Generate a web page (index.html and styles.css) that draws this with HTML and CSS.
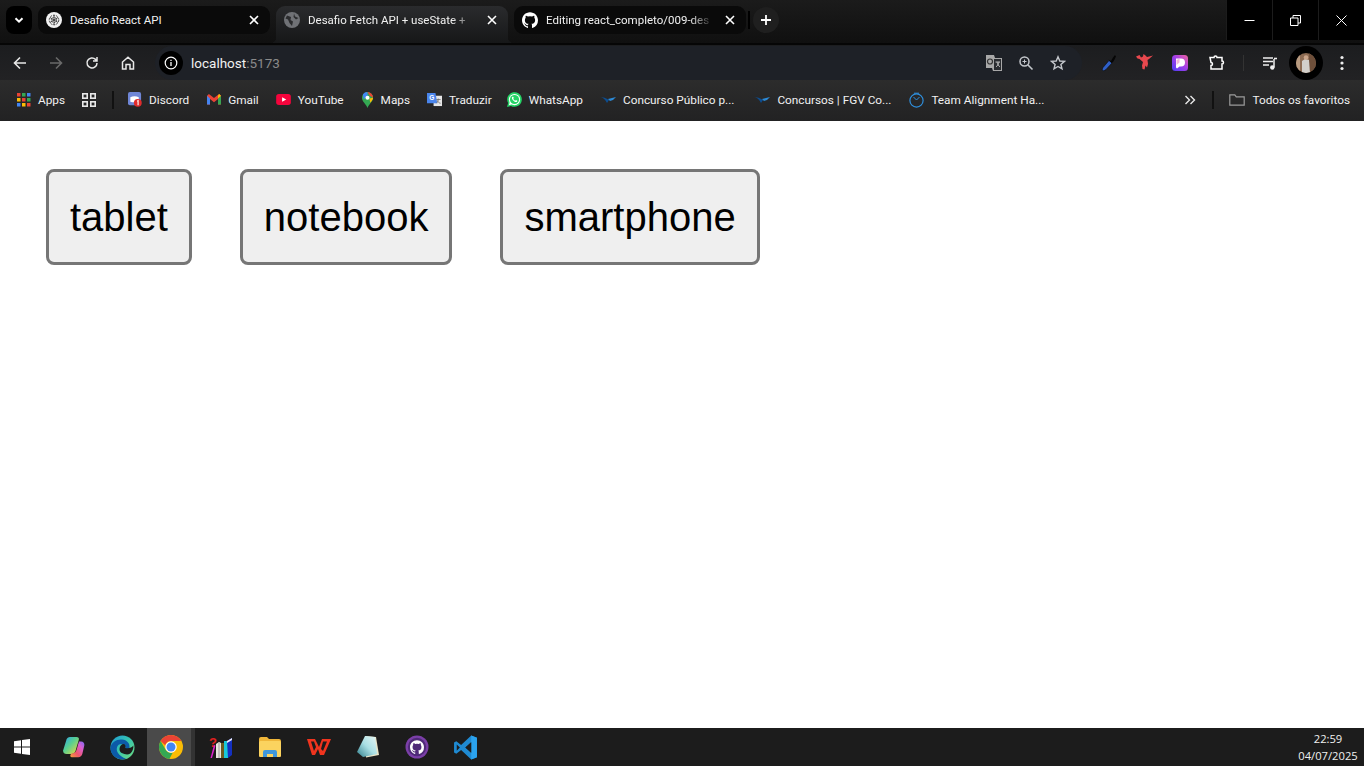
FILE: index.html
```html
<!DOCTYPE html>
<html lang="pt-BR">
<head>
<meta charset="utf-8">
<title>Desafio Fetch API + useState</title>
<link rel="stylesheet" href="styles.css">
</head>
<body>
<div class="app">
  <header class="chrome">
    <div class="tabstrip">
      <div class="tab-search"><svg width="12" height="12" viewBox="0 0 12 12"><path d="M2.500 4.200 6 7.700l3.500-3.500" fill="none" stroke="#fff" stroke-width="2"/></svg></div>
      <div class="tab">
        <svg class="fav" width="16" height="16" viewBox="0 0 16 16"><circle cx="8" cy="8" r="8" fill="#f2f2f2"/><g fill="none" stroke="#333" stroke-width=".9"><circle cx="8" cy="8" r="4.800" stroke-dasharray="2 1"/><circle cx="8" cy="8" r="2.600" stroke-dasharray="1.500 1"/><path d="M4 5.500 12 10.500M4 10.500 12 5.500M8 3v10"/></g></svg>
        <span class="tab-title">Desafio React API</span>
        <svg class="tab-x" width="10" height="10" viewBox="0 0 10 10"><path d="M1 1l8 8M9 1 1 9" stroke="#fff" stroke-width="1.600"/></svg>
      </div>
      <div class="tab active">
        <svg class="fav" width="16" height="16" viewBox="0 0 16 16"><circle cx="8" cy="8" r="8" fill="#707276"/><path d="M3 3.500 7 5 6.500 8 9 9.500 8 14 5.500 11 4 7.500 1.500 6.500ZM10 1.500l1 3 3.500 1.500L12 7.500 9.500 5Z" fill="#2b2c2e"/></svg>
        <span class="tab-title fade">Desafio Fetch API + useState +</span>
        <svg class="tab-x" width="10" height="10" viewBox="0 0 10 10"><path d="M1 1l8 8M9 1 1 9" stroke="#fff" stroke-width="1.600"/></svg>
      </div>
      <div class="tab last">
        <svg class="fav" width="16" height="16" viewBox="0 0 24 24"><path fill="#fff" d="M12 .5C5.370.5 0 5.870 0 12.500c0 5.300 3.440 9.800 8.200 11.390.6.110.82-.26.82-.58v-2.030c-3.340.73-4.040-1.610-4.040-1.610-.55-1.390-1.340-1.760-1.340-1.760-1.090-.75.08-.73.08-.73 1.200.08 1.840 1.240 1.840 1.240 1.070 1.830 2.810 1.300 3.500 1 .11-.78.42-1.310.76-1.610-2.670-.3-5.470-1.330-5.470-5.930 0-1.310.47-2.380 1.240-3.220-.12-.3-.54-1.520.12-3.180 0 0 1.010-.32 3.300 1.230a11.500 11.500 0 0 1 6 0c2.290-1.550 3.300-1.230 3.300-1.230.66 1.660.24 2.880.12 3.180.77.84 1.230 1.910 1.230 3.220 0 4.610-2.810 5.630-5.480 5.920.43.37.81 1.100.81 2.220v3.290c0 .32.22.7.82.58A12 12 0 0 0 24 12.500C24 5.870 18.630.5 12 .5z"/></svg>
        <span class="tab-title fade">Editing react_completo/009-des</span>
        <svg class="tab-x" width="10" height="10" viewBox="0 0 10 10"><path d="M1 1l8 8M9 1 1 9" stroke="#fff" stroke-width="1.600"/></svg>
      </div>
      <div class="tab-sep"></div>
      <div class="new-tab"><svg width="12" height="12" viewBox="0 0 12 12"><path d="M6 1v10M1 6h10" stroke="#fff" stroke-width="1.800"/></svg></div>
      <div class="window-controls">
        <div class="win-btn"><svg width="11" height="11" viewBox="0 0 11 11"><path d="M.5 5.500h10" stroke="#fff"/></svg></div>
        <div class="win-btn"><svg width="11" height="11" viewBox="0 0 11 11"><path d="M.5 3h7.500v7.500H.5zM3 3V.5h7.500V8H8" fill="none" stroke="#fff"/></svg></div>
        <div class="win-btn"><svg width="11" height="11" viewBox="0 0 11 11"><path d="M.5.5l10 10M10.500.5l-10 10" stroke="#fff"/></svg></div>
      </div>
    </div>

    <div class="toolbar">
      <div class="nav">
        <svg width="16" height="16" viewBox="0 0 16 16"><path d="M14 8H3M8 2.500 2.500 8 8 13.500" fill="none" stroke="#e8e8e8" stroke-width="1.600"/></svg>
        <svg width="16" height="16" viewBox="0 0 16 16"><path d="M2 8h11M8 2.500 13.500 8 8 13.500" fill="none" stroke="#6a6a6a" stroke-width="1.600"/></svg>
        <svg width="16" height="16" viewBox="0 0 16 16"><path d="M13 8a5 5 0 1 1-1.500-3.600L13 6M13 2v4H9" fill="none" stroke="#e8e8e8" stroke-width="1.500"/></svg>
        <svg width="16" height="16" viewBox="0 0 16 16"><path d="M2.500 14V7L8 2.200 13.500 7v7h-3.500V9.500H6V14Z" fill="none" stroke="#e8e8e8" stroke-width="1.500"/></svg>
      </div>
      <div class="omnibox">
        <div class="site-info"><svg width="14" height="14" viewBox="0 0 14 14"><circle cx="7" cy="7" r="5.800" fill="none" stroke="#fff" stroke-width="1.200"/><path d="M7 6v4M7 3.800v1.200" stroke="#fff" stroke-width="1.300"/></svg></div>
        <span class="url">localhost<span class="port">:5173</span></span>
        <div class="omni-actions">
          <svg width="18" height="18" viewBox="0 0 18 18"><path d="M1 1h8l1 3h7v13H8l-1-3H1z" fill="#a8a8a8"/><path d="M9 5h7v11H9z" fill="#2a2c30"/><circle cx="5" cy="7.500" r="2.500" fill="none" stroke="#333" stroke-width="1.200"/><path d="M10.500 8h4.500M12 8c.5 2.500 2 4 3 5M14 8c-.5 2.500-2 4-3 5" stroke="#bbb" fill="none"/></svg>
          <svg width="16" height="16" viewBox="0 0 16 16"><circle cx="6.500" cy="6.500" r="4.500" fill="none" stroke="#c4c7cc" stroke-width="1.500"/><path d="M10 10l4.500 4.500" stroke="#c4c7cc" stroke-width="1.600"/><path d="M4.500 6.500h4M6.500 4.500v4" stroke="#c4c7cc"/></svg>
          <svg width="16" height="16" viewBox="0 0 16 16"><path d="M8 1.800 9.800 6l4.600.4-3.500 3 1.100 4.500L8 11.500l-4 2.400 1.100-4.500-3.500-3L6.200 6Z" fill="none" stroke="#c4c7cc" stroke-width="1.400"/></svg>
        </div>
      </div>
      <div class="extensions">
        <svg width="16" height="18" viewBox="0 0 16 18"><path d="M1.500 16.500c-.5-1 0-2 .5-3L8 6.500l3 2.500-6 6.500c-1 1-2.500 1.500-3.500 1Z" fill="#2f5fc7" stroke="#0a0a0a" stroke-width=".6"/><path d="M7.500 5.500 10 7l2-3.500L14 1l1 1.500-1.500 3L12 8l-1.500 1Z" fill="#060606"/></svg>
        <svg class="ninja" width="18" height="17" viewBox="0 0 18 17"><path d="M0 2.500 3.500 1 5 3.500 7 2.500 7.500 0l2 1.500 1.500 1.500 6-1.500-4 3.500-1.500 1 .5 4-1 3.500-1.500-2-1 4-2-.5-.5-3.500 1-3.500L3.500 5 1.500 4.500Z" fill="#e8484e"/></svg>
        <svg width="16" height="16" viewBox="0 0 16 16"><defs><linearGradient id="pg" x1="0" y1="1" x2="1" y2="0"><stop offset="0" stop-color="#4b3df5"/><stop offset=".55" stop-color="#a63fe6"/><stop offset="1" stop-color="#f0649b"/></linearGradient></defs><rect width="16" height="16" rx="3.500" fill="url(#pg)"/><path d="M4 3.500h5a4 4 0 0 1 0 8H7.500L5 13.500l-1-1Z" fill="#fff"/><path d="M4.500 5 7.500 3.700V7.500L4.500 10Z" fill="#f2b6d8"/></svg>
        <svg width="17" height="17" viewBox="0 0 17 17"><path d="M2 3.500h4a1.500 1.500 0 0 1 3 0h5V7a1.500 1.500 0 0 1 0 3v5H3v-3.500a1.500 1.500 0 0 0 0-3Z" fill="none" stroke="#fff" stroke-width="1.500"/></svg>
        <div class="ext-sep"></div>
        <svg width="16" height="16" viewBox="0 0 16 16"><path d="M1 3h10M1 6.500h10M1 10h6" stroke="#eee" stroke-width="1.400"/><path d="M12 4v8.500" stroke="#eee" stroke-width="1.500"/><circle cx="10.300" cy="12.500" r="2.200" fill="#eee"/><path d="M12 3.500h3" stroke="#eee" stroke-width="1.600"/></svg>
        <div class="avatar"><svg width="20" height="20" viewBox="0 0 20 20"><defs><clipPath id="ac"><circle cx="10" cy="10" r="10"/></clipPath></defs><g clip-path="url(#ac)"><rect width="20" height="20" fill="#8c6b52"/><rect x="13" width="7" height="20" fill="#6e4f3a"/><rect x="0" width="4" height="20" fill="#b79a80"/><path d="M6 8l3-2 4 1 1 13H6z" fill="#d2cfca"/><circle cx="10" cy="4.500" r="2.300" fill="#caa58a"/></g></svg></div>
        <svg class="kebab" width="4" height="16" viewBox="0 0 4 16"><circle cx="2" cy="2.500" r="1.600" fill="#eee"/><circle cx="2" cy="8" r="1.600" fill="#eee"/><circle cx="2" cy="13.500" r="1.600" fill="#eee"/></svg>
      </div>
    </div>

    <nav class="bookmarks">
      <div class="bm">
        <svg width="14" height="14" viewBox="0 0 14 14"><rect width="3.500" height="3.500" fill="#ea4335"/><rect x="5" width="3.500" height="3.500" fill="#34a853"/><rect x="10" width="3.500" height="3.500" fill="#4285f4"/><rect y="5" width="3.500" height="3.500" fill="#fbbc05"/><rect x="5" y="5" width="3.500" height="3.500" fill="#ea4335"/><rect x="10" y="5" width="3.500" height="3.500" fill="#34a853"/><rect y="10" width="3.500" height="3.500" fill="#4285f4"/><rect x="5" y="10" width="3.500" height="3.500" fill="#fbbc05"/><rect x="10" y="10" width="3.500" height="3.500" fill="#ea4335"/></svg>
        <span>Apps</span>
      </div>
      <svg class="bm-grid" width="14" height="14" viewBox="0 0 14 14"><g fill="none" stroke="#e8e8e8" stroke-width="1.600"><rect x=".8" y=".8" width="4.400" height="4.400"/><rect x="8.800" y=".8" width="4.400" height="4.400"/><rect x=".8" y="8.800" width="4.400" height="4.400"/><rect x="8.800" y="8.800" width="4.400" height="4.400"/></g></svg>
      <div class="bm-sep first"></div>
      <div class="bm bm-discord">
        <svg width="14" height="16" viewBox="0 0 15 17"><rect y="0" width="14" height="14" rx="2" fill="#6f86d6"/><path d="M2.500 5.500c2.500-1.500 6.500-1.500 9 0v5l-2 .5H4.500l-2-.5Z" fill="#fff"/><circle cx="10.500" cy="11.500" r="4.200" fill="#e02b2b"/><path d="M9.800 9.800l1-.6v4.800" stroke="#fff" stroke-width="1.200" fill="none"/></svg>
        <span>Discord</span>
      </div>
      <div class="bm">
        <svg width="14" height="13" viewBox="0 0 15 14"><path d="M0 3v9.500h3.200V6.500L7.500 10l4.300-3.500v6H15V3L13 1 7.500 5.500 2 1Z" fill="#ea4335"/><path d="M0 3v9.500h3.200V6Z" fill="#4285f4"/><path d="M11.800 6v6.500H15V3Z" fill="#34a853"/><path d="M13 1l2 2-3.200 3V3Z" fill="#fbbc05"/></svg>
        <span>Gmail</span>
      </div>
      <div class="bm">
        <svg width="15" height="11" viewBox="0 0 16 12"><rect width="16" height="12" rx="3" fill="#f5043c"/><path d="M6.500 3.500 11 6 6.500 8.500Z" fill="#fff"/></svg>
        <span>YouTube</span>
      </div>
      <div class="bm">
        <svg width="13" height="16" viewBox="0 0 14 17"><path d="M7 0a6 6 0 0 1 6 6c0 4-4 6-6 11C5 12 1 10 1 6a6 6 0 0 1 6-6Z" fill="#34a853"/><path d="M2 2.500A6 6 0 0 1 7 0v4L3 8Z" fill="#4285f4"/><path d="M7 0a6 6 0 0 1 6 6L9.500 4Z" fill="#ea4335"/><path d="M13 6c0 2-1.500 3.500-3 5.500L9 7Z" fill="#fbbc05"/><circle cx="7" cy="6" r="2.200" fill="#fff"/></svg>
        <span>Maps</span>
      </div>
      <div class="bm">
        <svg width="15" height="15" viewBox="0 0 16 16"><path d="M7 4h9v11H7z" fill="#e6e6e6"/><path d="M0 1h9l2 11H0z" fill="#4a85ec"/><text class="g-glyph" x="2.500" y="9">G</text><path d="M10 8h4.500M12 7v1c0 2-1 3-2 4M11 9c.5 1.500 2 3 3.500 3" stroke="#666" stroke-width=".8" fill="none"/></svg>
        <span>Traduzir</span>
      </div>
      <div class="bm bm-whats">
        <svg width="15" height="15" viewBox="0 0 16 16"><path d="M0 16l1.200-4.200A7.800 7.800 0 1 1 4.200 14.800Z" fill="#25d366"/><circle cx="8" cy="8" r="6" fill="#fff"/><path d="M2 14l1-3.500 2.500 2.500Z" fill="#fff"/><circle cx="8" cy="8" r="4.900" fill="#25d366"/><path d="M5.800 5c-.8.6-.9 2 .4 3.600 1.300 1.700 3 2.500 4 2 .6-.3.800-.9.800-1.300L9.600 8.500l-.8.8c-1-.4-1.700-1.100-2.200-2.100l.7-.8L6.600 5Z" fill="#fff"/></svg>
        <span>WhatsApp</span>
      </div>
      <div class="bm">
        <svg width="16" height="8" viewBox="0 0 16 8"><path d="M0 1c3 .5 5 2 7 6l2-3C6 2 3 1 0 1Z" fill="#0d4d90"/><path d="M8 3l8-2-3 3-3 1Z" fill="#2c8ad6"/></svg>
        <span>Concurso Público p...</span>
      </div>
      <div class="bm bm-wide">
        <svg width="16" height="8" viewBox="0 0 16 8"><path d="M0 1c3 .5 5 2 7 6l2-3C6 2 3 1 0 1Z" fill="#0d4d90"/><path d="M8 3l8-2-3 3-3 1Z" fill="#2c8ad6"/></svg>
        <span>Concursos | FGV Co...</span>
      </div>
      <div class="bm bm-team">
        <svg width="15" height="16" viewBox="0 0 15 16"><circle cx="7.500" cy="8.500" r="6.600" fill="none" stroke="#2f8fdc" stroke-width="1.200"/><path d="M4.500 5l3 3 3-3M5 1.200h5" fill="none" stroke="#2f8fdc"/></svg>
        <span>Team Alignment Ha...</span>
      </div>
      <div class="bm-right">
        <svg width="12" height="10" viewBox="0 0 12 10"><path d="M1.500 1l4 4-4 4M6.500 1l4 4-4 4" fill="none" stroke="#e8e8e8" stroke-width="1.400"/></svg>
        <div class="bm-sep"></div>
        <div class="bm all">
          <svg width="16" height="14" viewBox="0 0 16 14"><path d="M.8 12.200V1.800h5l1.500 2h7.900v8.400Z" fill="none" stroke="#9a9a9a" stroke-width="1.200"/></svg>
          <span>Todos os favoritos</span>
        </div>
      </div>
    </nav>
  </header>

  <main class="page">
    <button class="product">tablet</button>
    <button class="product">notebook</button>
    <button class="product">smartphone</button>
  </main>

  <footer class="taskbar">
    <div class="task"><svg width="16" height="16" viewBox="0 0 16 16"><path d="M0 2.300 7 1.300V7.500H0ZM8 1.100 16 0V7.500H8ZM0 8.500H7V14.700L0 13.700ZM8 8.500H16V16L8 14.900Z" fill="#fff"/></svg></div>
    <div class="task"><svg width="24" height="24" viewBox="0 0 24 24"><defs><linearGradient id="co1" x1="0" y1="0" x2="1" y2="1"><stop offset="0" stop-color="#2aa4ee"/><stop offset=".45" stop-color="#5ad08f"/><stop offset="1" stop-color="#f7d83c"/></linearGradient><linearGradient id="co2" x1="0" y1="1" x2="1" y2="0"><stop offset="0" stop-color="#f6a13c"/><stop offset=".35" stop-color="#f0566a"/><stop offset=".7" stop-color="#d95fd0"/><stop offset="1" stop-color="#7a6af5"/></linearGradient></defs><path d="M8 2h6.500c1.800 0 2.800 1 2.300 2.800L13.500 16c-.6 2-2 3-4 3H4.500C2.300 19 .7 17.500 1.200 15.300L4.500 4.500C5 3 6.300 2 8 2Z" fill="url(#co1)"/><path d="M17 6.500h2c2.500 0 3.700 1.800 3.300 4l-2 8.500c-.5 2-2 3.200-4 3.200H9.800c-1.300 0-1.800-1.200-1.300-2.500l1-1.200c2.500 0 4.300-1 5-3.500Z" fill="url(#co2)"/></svg></div>
    <div class="task"><svg width="25" height="25" viewBox="0 0 25 25"><defs><linearGradient id="ed1" x1="0" y1="0" x2="1" y2="1"><stop offset="0" stop-color="#1e9ad8"/><stop offset=".45" stop-color="#35c4b0"/><stop offset="1" stop-color="#6fdc7e"/></linearGradient></defs><circle cx="12.500" cy="12.500" r="12" fill="url(#ed1)"/><path d="M.5 13C1 7 7 4 12 4.500c5 .4 8 4 7.500 8-.2 1.500-2 2-4.500 1.500 1-2 0-5-3.500-5C7 9 5.500 14 8 18c1.500 2.500 4.500 4.500 8 5.800-1.200.5-2.300.7-3.500.7C6 24.500.5 19.500.5 13Z" fill="#0c5aa8"/><path d="M9.500 14c0-3 2-5 4-5 1.500.2 2.500 1.500 1.800 4 3 .8 6.500 0 8-2.500.5 3-1 6.500-3 8-3 2-6 .5-8.500-.5C10.500 17.500 9.500 16 9.500 14Z" fill="#1c1c1c"/></svg></div>
    <div class="task running"><svg width="24" height="24" viewBox="0 0 48 48"><circle cx="24" cy="24" r="24" fill="#fbbc05"/><path d="M24 0a24 24 0 0 1 20.800 12H24a12 12 0 0 0-11.500 8.500L3.200 12A24 24 0 0 1 24 0Z" fill="#ea4335"/><path d="M3.200 12 13.600 30a12 12 0 0 0 13.800 5.500L20.700 47.800A24 24 0 0 1 3.200 12Z" fill="#34a853"/><circle cx="24" cy="24" r="11.500" fill="#fff"/><circle cx="24" cy="24" r="9" fill="#4285f4"/></svg></div>
    <div class="task"><svg width="24" height="24" viewBox="0 0 24 24"><text class="q-glyph" x="0" y="12">?</text><path d="M1.500 23 5 10l1.500.5L3 23Z" fill="#e020d0"/><path d="M7 9l3-2 2 1v15H7Z" fill="#e8e8e0"/><rect x="9.500" y="8" width="1" height="15" fill="#999"/><rect x="12" y="8" width="3" height="15" fill="#6b5a20"/><rect x="15" y="6" width="4" height="17" fill="#18c8d8"/><path d="M18 6l5-3v17l-4 3Z" fill="#1430c0"/><path d="M18 6l5-3v2l-5 3Z" fill="#e8e8ff"/></svg></div>
    <div class="task"><svg width="22" height="20" viewBox="0 0 22 20"><path d="M0 2a2 2 0 0 1 2-2h6l2 2h10a2 2 0 0 1 2 2v14a2 2 0 0 1-2 2H2a2 2 0 0 1-2-2Z" fill="#f0b73a"/><rect y="4" width="22" height="16" rx="1.500" fill="#fbd35f"/><path d="M4 20v-5a2 2 0 0 1 2-2h10a2 2 0 0 1 2 2v5h-4v-3H8v3Z" fill="#3f97dc"/></svg></div>
    <div class="task"><svg width="24" height="18" viewBox="0 0 24 18"><path d="M0 1h8l4 8 3-8h9l-7 16h-4l-2-6-3 6H5Zm4 2.500L7 13l2-4-2-5.500Zm12 0L14 11l2 2 4-9.500Z" fill="#f0341e" fill-rule="evenodd"/></svg></div>
    <div class="task"><svg width="22" height="24" viewBox="0 0 22 24"><defs><linearGradient id="nt" x1="0" y1="1" x2="1" y2="0"><stop offset="0" stop-color="#2f7f8c"/><stop offset=".5" stop-color="#a9dfe4"/><stop offset="1" stop-color="#e8f6f4"/></linearGradient></defs><path d="M8 1 19 2l3 18-13 2.500Z" fill="#e8e4c8"/><path d="M8 1 18 2l2 17-14 3L0 17Z" fill="url(#nt)"/></svg></div>
    <div class="task"><svg width="24" height="24" viewBox="0 0 24 24"><circle cx="12" cy="12" r="11.500" fill="#7b3fa8"/><circle cx="12" cy="12" r="9.200" fill="#4f2a78"/><path transform="translate(5 5) scale(.583)" fill="#fff" d="M12 .5C5.370.5 0 5.870 0 12.500c0 5.300 3.440 9.800 8.200 11.390.6.110.82-.26.82-.58v-2.030c-3.340.73-4.040-1.610-4.040-1.610-.55-1.390-1.340-1.760-1.340-1.760-1.090-.75.08-.73.08-.73 1.200.08 1.840 1.240 1.840 1.240 1.070 1.830 2.810 1.300 3.500 1 .11-.78.42-1.310.76-1.610-2.670-.3-5.470-1.330-5.470-5.930 0-1.310.47-2.380 1.240-3.220-.12-.3-.54-1.520.12-3.180 0 0 1.010-.32 3.300 1.230a11.500 11.500 0 0 1 6 0c2.290-1.550 3.300-1.230 3.300-1.230.66 1.660.24 2.880.12 3.180.77.84 1.230 1.910 1.230 3.220 0 4.610-2.810 5.630-5.480 5.920.43.37.81 1.100.81 2.220v3.290c0 .32.22.7.82.58A12 12 0 0 0 24 12.500C24 5.870 18.630.5 12 .5z"/></svg></div>
    <div class="task"><svg width="25" height="25" viewBox="0 0 24 24"><path d="M17.500.5 7.800 9.700 3.200 6.100 1 7.200v9.600l2.200 1.100 4.600-3.600 9.700 9.200L23 21.300V2.700ZM3.600 15V9l3 3ZM17.500 17l-5.600-5 5.600-5Z" fill="#1f8ad2" fill-rule="evenodd"/><path d="M17.500.5 23 2.700v18.600l-5.500 2.200Z" fill="#2ba3ee"/><path d="M17.500 7 11.900 12l5.600 5Z" fill="#1c1c1c"/></svg></div>
    <div class="clock"><span>22:59</span><span>04/07/2025</span></div>
  </footer>
</div>
</body>
</html>
```

FILE: styles.css
```css
* { box-sizing: border-box; }
html, body { margin: 0; height: 100%; }
body { font-family: "Open Sans", "Noto Sans", sans-serif; overflow: hidden; background: #fff; }
.app { display: flex; flex-direction: column; height: 766px; }

.chrome { flex: none; height: 121px; display: flex; flex-direction: column; color: #f1f1f1; font-family: Roboto, "Noto Sans", sans-serif; }

.tabstrip { height: 45px; display: flex; background: linear-gradient(#1b1b1b, #101010); border-bottom: 2px solid #060606; padding: 6px 0 0 6px; }
.tab-search { width: 26px; height: 28px; background: #000; border-radius: 8px; display: flex; align-items: center; justify-content: center; margin-right: 6px; }
.tab { width: 232px; height: 28px; margin-right: 6px; background: #0a0a0a; border-radius: 9px; display: flex; align-items: center; padding: 0 11px 0 8px; font-size: 11.500px; }
.tab.active { background: linear-gradient(#2a2b2d, #161718); height: 37px; border-radius: 9px 9px 0 0; padding-bottom: 9px; position: relative; }
.tab.active::before, .tab.active::after { content: ""; position: absolute; bottom: 0; width: 6px; height: 6px; }
.tab.active::before { left: -6px; background: radial-gradient(circle at 0 0, transparent 6px, #161718 6.500px); }
.tab.active::after { right: -6px; background: radial-gradient(circle at 100% 0, transparent 6px, #161718 6.500px); }
.tab.last { margin-right: 2px; }
.fav { flex: none; margin-right: 8px; }
.tab-title { flex: 1; white-space: nowrap; min-width: 0; }
.fade { -webkit-mask-image: linear-gradient(90deg, #000 84%, transparent 98%); mask-image: linear-gradient(90deg, #000 84%, transparent 98%); }
.tab-x { flex: none; margin-left: 8px; }
.tab-sep { width: 2px; height: 18px; background: #000; margin: 5px 3px 0 0; }
.new-tab { width: 26px; height: 26px; border-radius: 50%; background: #1f1f1f; display: flex; align-items: center; justify-content: center; margin-top: 1px; }
.window-controls { margin-left: auto; margin-top: -6px; height: 40px; display: flex; background: #000; }
.win-btn { width: 46px; display: flex; align-items: center; justify-content: center; border-left: 1px solid #1c1c1c; }

.toolbar { height: 35px; display: flex; align-items: center; background: linear-gradient(#1c1d1f, #222224); }
.nav { display: flex; gap: 20px; padding-left: 12px; width: 155px; }
.omnibox { width: 927px; height: 34px; background: #1e2127; border-radius: 17px; display: flex; align-items: center; padding: 0 16px 0 4px; }
.site-info { width: 24px; height: 24px; background: #000; border-radius: 50%; display: flex; align-items: center; justify-content: center; margin-right: 8px; }
.url { font-size: 13.500px; color: #f1f1f1; }
.port { color: #8a8a8a; }
.omni-actions { margin-left: auto; display: flex; align-items: center; gap: 15px; }
.omni-actions svg:nth-child(2) { margin-right: 1px; }
.extensions { flex: 1; display: flex; align-items: center; padding-left: 19px; }
.extensions > svg { margin-right: 20px; flex: none; }
.extensions > .ninja { margin: 0 18px 0 -1px; }
.ext-sep { width: 1px; height: 16px; background: #333; margin: 0 18px 0 -2px; }
.extensions > svg:nth-of-type(5) { margin-right: 11px; }
.avatar { width: 34px; height: 34px; border-radius: 50%; background: #000; display: flex; align-items: center; justify-content: center; margin-right: 17px; }
.extensions > .kebab { margin-right: 0; }

.bookmarks { height: 41px; display: flex; align-items: center; padding: 0 14px 2px 17px; background: linear-gradient(#2c2c2c, #222223); font-size: 11.800px; gap: 17px; }
.bm { display: flex; align-items: center; gap: 7px; white-space: nowrap; flex: none; }
.bm svg { flex: none; }
.bm-grid { flex: none; }
.bm-sep { width: 2px; height: 18px; background: #111; flex: none; margin: 0 -2px 0 -1px; }
.bm-sep.first { margin-right: -3px; }
.bm-discord { margin-right: 1px; }
.bm-whats { margin-left: -2px; }
.bm-wide { margin-left: 3px; }
.bm-team { margin-left: 1px; }
.bm-right { margin-left: auto; display: flex; align-items: center; gap: 17px; }
.g-glyph { font: bold 7px "Liberation Sans", sans-serif; fill: #fff; }
.q-glyph { font: bold 13px "Liberation Sans", sans-serif; fill: #e02020; }

.page { flex: 1; display: flex; align-items: flex-start; gap: 48px; padding: 48px 46px; background: #fff; }
.product { font-family: "Liberation Sans", Arial, sans-serif; font-size: 40px; color: #000; background: #efefef; border: 3px solid #767676; border-radius: 8px; padding: 22px 21px; height: 96px; line-height: 46px; }

.taskbar { flex: none; height: 38px; background: #1c1c1c; display: flex; align-items: center; font-family: "Open Sans", "Noto Sans", sans-serif; }
.task { width: 49px; height: 38px; display: flex; align-items: center; justify-content: center; flex: none; }
.task:first-child { width: 44px; margin-right: 5px; }
.task.running { background: #4a4a4a; width: 44px; padding-left: 4px; box-shadow: 4px 0 0 #333; margin-right: 5px; }
.clock { margin-left: auto; width: 72px; display: flex; flex-direction: column; align-items: center; font-size: 11.200px; line-height: 17px; color: #f0f0f0; }
```
